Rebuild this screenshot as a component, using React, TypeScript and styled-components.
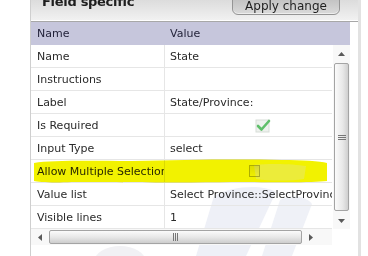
import React from "react";
import styled, { createGlobalStyle } from "styled-components";

const GlobalStyle = createGlobalStyle`
    html, body {
        margin: 0;
        padding: 0;
        background: #ffffff;
        overflow: hidden;
    }
    body {
        font-family: "DejaVu Sans", Tahoma, sans-serif;
        font-size: 11px;
        color: #2a2a2a;
    }
`;

const Page = styled.div`
    position: relative;
    width: 368px;
    height: 256px;
    padding-left: 30px;
    box-sizing: border-box;
    display: flex;
    overflow: hidden;
`;

const Watermark = styled.svg`
    position: absolute;
    left: 0;
    top: 0;
    z-index: 0;
    pointer-events: none;
`;

const Panel = styled.div`
    position: relative;
    z-index: 1;
    width: 327px;
    height: 100%;
    display: flex;
    flex-direction: column;
    border-left: 1px solid #cfcfcf;
    border-right: 3px solid #e2e2e2;
`;

const TitleBar = styled.div`
    height: 21px;
    flex: none;
    display: flex;
    justify-content: space-between;
    align-items: flex-start;
    background: linear-gradient(#dcdcdc, #f2f2f2);
    border-bottom: 1px solid #a8a8a8;
    box-shadow: inset 0 -1px 0 #ffffff;
`;

const Title = styled.div`
    margin: -6px 0 0 11px;
    font-size: 13px;
    font-weight: bold;
    color: #1e1e1e;
    letter-spacing: -0.3px;
`;

const ApplyButton = styled.button`
    margin: -8px 18px 0 0;
    width: 108px;
    height: 23px;
    padding: 5px 0 0;
    border: 1px solid #959595;
    border-radius: 6px;
    background: linear-gradient(#b8b8b8, #dadada);
    box-shadow: inset 0 -1px 0 #ededed;
    font-family: "DejaVu Sans", Tahoma, sans-serif;
    font-size: 12px;
    color: #1e1e1e;
    line-height: 14px;
`;

const HeaderRow = styled.div`
    width: 319px;
    height: 23px;
    flex: none;
    display: grid;
    grid-template-columns: 133px 1fr;
    align-items: center;
    background: #c6c6dc;
    color: #23233a;
`;

const HeadCell = styled.div`
    padding-left: 6px;
`;

const Body = styled.div`
    display: flex;
    width: 319px;
`;

const Rows = styled.div`
    width: 301px;
    display: flex;
    flex-direction: column;
`;

const Row = styled.div`
    position: relative;
    height: 23px;
    display: grid;
    grid-template-columns: 133px 168px;
    border-bottom: 1px solid #e6e6e6;
    box-sizing: border-box;
`;

const Cell = styled.div<{ $value?: boolean; $inset?: number }>`
    position: relative;
    z-index: 1;
    display: flex;
    align-items: center;
    padding-left: ${({ $inset }) => ($inset ?? 6)}px;
    border-left: ${({ $value }) => ($value ? "1px solid #e6e6e6" : "none")};
    white-space: nowrap;
    overflow: hidden;
    box-sizing: border-box;
`;

const Highlight = styled.svg`
    position: absolute;
    left: 1px;
    top: -1px;
    z-index: 2;
    mix-blend-mode: multiply;
    pointer-events: none;
`;

const VScroll = styled.div`
    width: 18px;
    margin-left: 1px;
    display: flex;
    flex-direction: column;
    align-items: center;
    background: #f8f8f8;
`;

const ArrowBox = styled.div`
    height: 17px;
    width: 100%;
    display: flex;
    align-items: center;
    justify-content: center;
`;

const VThumb = styled.div`
    width: 15px;
    flex: 1;
    margin: 1px 0;
    border: 1px solid #a4a4a4;
    border-radius: 2px;
    box-sizing: border-box;
    background: linear-gradient(90deg, #fbfbfb, #e8e8e8 60%, #cfcfcf);
    display: flex;
    align-items: center;
    justify-content: center;
`;

const HScrollRow = styled.div`
    display: flex;
    width: 319px;
    height: 16px;
    flex: none;
`;

const HScroll = styled.div`
    width: 301px;
    display: flex;
    align-items: center;
    background: #f8f8f8;
`;

const HArrow = styled.div`
    width: 17px;
    height: 100%;
    display: flex;
    align-items: center;
    justify-content: center;
`;

const HThumb = styled.div`
    width: 253px;
    height: 14px;
    margin-left: 1px;
    border: 1px solid #a4a4a4;
    border-radius: 2px;
    box-sizing: border-box;
    background: linear-gradient(#fbfbfb, #e6e6e6 55%, #cdcdcd);
    display: flex;
    align-items: center;
    justify-content: center;
`;

const Corner = styled.div`
    flex: 1;
    background: #ffffff;
`;

const Grip = ({ vertical }: { vertical?: boolean }) => (
    <svg width={vertical ? 8 : 7} height={vertical ? 7 : 8} viewBox={vertical ? "0 0 8 7" : "0 0 7 8"}>
        {[0, 1, 2].map((i) =>
            vertical ? (
                <rect key={i} x={0} y={i * 2 + 1} width={8} height={1} fill="#777" />
            ) : (
                <rect key={i} x={i * 2 + 1} y={0} width={1} height={8} fill="#777" />
            ),
        )}
    </svg>
);

const Triangle = ({ dir }: { dir: "up" | "down" | "left" | "right" }) => {
    const pts = {
        up: "0,4 3.5,0 7,4",
        down: "0,0 3.5,4 7,0",
        left: "4,0 0,3.5 4,7",
        right: "0,0 4,3.5 0,7",
    }[dir];
    const horiz = dir === "left" || dir === "right";
    return (
        <svg width={horiz ? 4 : 7} height={horiz ? 7 : 4} viewBox={horiz ? "0 0 4 7" : "0 0 7 4"}>
            <polygon points={pts} fill="#5a5a5a" />
        </svg>
    );
};

const CheckIcon = () => (
    <svg width="16" height="15" viewBox="0 0 16 15">
        <rect x="1" y="2" width="13" height="12" fill="#eef2ee" stroke="#d7ddd7" />
        <path d="M3 8 L6.5 11.5 L14 3" fill="none" stroke="#5fbf6a" strokeWidth="2.6" strokeLinecap="round" strokeLinejoin="round" />
    </svg>
);

const Checkbox = styled.span`
    display: inline-block;
    width: 9px;
    height: 10px;
    border: 1px solid #b8b8a8;
    background: linear-gradient(#e9e9e9, #fdfdfd);
`;

const rows: { label: string; value?: React.ReactNode; inset?: number; highlight?: boolean }[] = [
    { label: "Name", value: "State" },
    { label: "Instructions", value: "" },
    { label: "Label", value: "State/Province:" },
    { label: "Is Required", value: <CheckIcon />, inset: 90 },
    { label: "Input Type", value: "select" },
    { label: "Allow Multiple Selection", value: <Checkbox />, inset: 84, highlight: true },
    { label: "Value list", value: "Select Province::SelectProvince" },
    { label: "Visible lines", value: "1" },
];

export default function App() {
    return (
        <>
            <GlobalStyle />
            <Page>
                <Watermark width="368" height="256" viewBox="0 0 368 256">
                    <path d="M214 196 C232 186 262 184 276 192 L246 256 L196 256 Z" fill="#eef0f7" />
                    <path d="M280 200 C292 194 306 196 312 204 L292 256 L262 256 Z" fill="#eff1f7" />
                    <ellipse cx="120" cy="262" rx="26" ry="16" fill="#f1f1f4" />
                </Watermark>
                <Panel>
                    <TitleBar>
                        <Title>Field specific</Title>
                        <ApplyButton>Apply change</ApplyButton>
                    </TitleBar>
                    <HeaderRow>
                        <HeadCell>Name</HeadCell>
                        <HeadCell>Value</HeadCell>
                    </HeaderRow>
                    <Body>
                        <Rows>
                            {rows.map((r) => (
                                <Row key={r.label}>
                                    <Cell>{r.label}</Cell>
                                    <Cell $value $inset={r.inset ?? 5}>
                                        {r.value}
                                    </Cell>
                                    {r.highlight && (
                                        <Highlight width="296" height="25" viewBox="0 0 296 25">
                                            <path
                                                d="M2 4 C20 1 60 2 100 2 C150 1 200 0 250 1 C270 1 288 2 295 4 L295 22 C280 24 240 23 200 23 C150 24 80 23 40 23 C20 24 6 23 2 22 Z"
                                                fill="#f2f200"
                                            />
                                            <path d="M222 6 C240 4 262 5 274 7 L272 20 C258 22 238 22 224 20 Z" fill="#ecec3a" />
                                        </Highlight>
                                    )}
                                </Row>
                            ))}
                        </Rows>
                        <VScroll>
                            <ArrowBox>
                                <Triangle dir="up" />
                            </ArrowBox>
                            <VThumb>
                                <Grip vertical />
                            </VThumb>
                            <ArrowBox>
                                <Triangle dir="down" />
                            </ArrowBox>
                        </VScroll>
                    </Body>
                    <HScrollRow>
                        <HScroll>
                            <HArrow>
                                <Triangle dir="left" />
                            </HArrow>
                            <HThumb>
                                <Grip />
                            </HThumb>
                            <HArrow>
                                <Triangle dir="right" />
                            </HArrow>
                        </HScroll>
                        <Corner />
                    </HScrollRow>
                </Panel>
            </Page>
        </>
    );
}
